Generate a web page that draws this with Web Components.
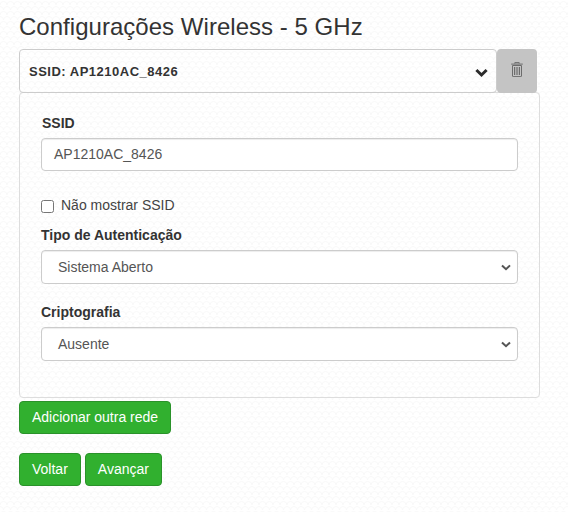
<!DOCTYPE html>
<html lang="pt">
<head>
<meta charset="utf-8">
<title>Configurações Wireless</title>
<style>
    html, body {
        margin: 0;
        background: #fff;
    }

    body {
        font-family: "Liberation Sans", Arial, sans-serif;
        font-size: 14px;
        color: #333;
    }
</style>
</head>
<body>
<wizard-page>
    <h-title slot="title">Configurações Wireless - 5 GHz</h-title>
    <ssid-header slot="header">SSID: AP1210AC_8426</ssid-header>
    <form-panel slot="panel">
        <text-field label="SSID" value="AP1210AC_8426"></text-field>
        <check-field>Não mostrar SSID</check-field>
        <select-field label="Tipo de Autenticação" value="Sistema Aberto"></select-field>
        <select-field label="Criptografia" value="Ausente"></select-field>
    </form-panel>
    <green-button slot="add">Adicionar outra rede</green-button>
    <green-button slot="nav">Voltar</green-button>
    <green-button slot="nav">Avançar</green-button>
</wizard-page>

<script>
class WizardPage extends HTMLElement {
    constructor() {
        super();
        this.attachShadow({ mode: 'open' });
        this.shadowRoot.innerHTML = `
            <style>
                :host {
                    display: block;
                    box-sizing: border-box;
                    width: 568px;
                    height: 512px;
                    padding: 14px 28px 0 19px;
                    overflow: hidden;
                    background-color: #fff;
                    background-image: url("data:image/svg+xml,%3Csvg xmlns='http://www.w3.org/2000/svg' width='14' height='10'%3E%3Cpath d='M0 5a3.5 3.5 0 0 1 7 0a3.5 3.5 0 0 1 7 0M-3.5 10a3.5 3.5 0 0 1 7 0a3.5 3.5 0 0 1 7 0a3.5 3.5 0 0 1 7 0' fill='none' stroke='%23f8f8f8'/%3E%3C/svg%3E");
                }

                .add {
                    display: flex;
                    margin-top: 3px;
                }

                .nav {
                    display: flex;
                    gap: 4px;
                    margin-top: 19px;
                }
            </style>
            <slot name="title"></slot>
            <slot name="header"></slot>
            <slot name="panel"></slot>
            <div class="add"><slot name="add"></slot></div>
            <div class="nav"><slot name="nav"></slot></div>
        `;
    }
}

class HTitle extends HTMLElement {
    constructor() {
        super();
        this.attachShadow({ mode: 'open' });
        this.shadowRoot.innerHTML = `
            <style>
                :host {
                    display: block;
                    font-size: 24px;
                    line-height: 26px;
                    letter-spacing: .03px;
                    height: 35px;
                    color: #333;
                }
            </style>
            <slot></slot>
        `;
    }
}

class SsidHeader extends HTMLElement {
    constructor() {
        super();
        this.attachShadow({ mode: 'open' });
        this.shadowRoot.innerHTML = `
            <style>
                :host {
                    display: flex;
                    height: 44px;
                }

                .bar {
                    box-sizing: border-box;
                    width: 478px;
                    display: flex;
                    align-items: center;
                    justify-content: space-between;
                    padding: 0 8px 0 9px;
                    border: 1px solid #ccc;
                    border-radius: 4px;
                    font-size: 13px;
                    font-weight: bold;
                    letter-spacing: .5px;
                    color: #333;
                }

                .trash {
                    width: 40px;
                    display: flex;
                    align-items: center;
                    justify-content: center;
                    padding-bottom: 4px;
                    box-sizing: border-box;
                    background: #c4c4c4;
                    border-radius: 4px;
                }
            </style>
            <div class="bar">
                <span><slot></slot></span>
                <svg width="13" height="10" viewBox="0 0 13 10" style="margin-top:3px"><path d="M1.4 2 6.5 7l5.1-5" fill="none" stroke="#2b2b2b" stroke-width="3"/></svg>
            </div>
            <div class="trash">
                <svg width="12" height="15" viewBox="0 0 12 15"><path d="M3.8 1.6V.6h4.4v1M.2 2.1h11.6" fill="none" stroke="#6c6c6c" stroke-width="1"/><path d="M1.5 3.5h9V14a.6.6 0 0 1-.6.6H2.1a.6.6 0 0 1-.6-.6z" fill="none" stroke="#6c6c6c"/><path d="M3.6 5v8M6 5v8M8.4 5v8" stroke="#6c6c6c" stroke-width="1.2"/></svg>
            </div>
        `;
    }
}

class FormPanel extends HTMLElement {
    constructor() {
        super();
        this.attachShadow({ mode: 'open' });
        this.shadowRoot.innerHTML = `
            <style>
                :host {
                    display: block;
                    box-sizing: border-box;
                    width: 521px;
                    height: 306px;
                    margin-top: -1px;
                    padding: 20px 21px 0 21px;
                    border: 1px solid #ddd;
                    border-radius: 4px;
                }
            </style>
            <slot></slot>
        `;
    }
}

const fieldControl = `
    .label {
        display: block;
        font-size: 14px;
        font-weight: bold;
        line-height: 20px;
        color: #333;
    }

    .box {
        box-sizing: border-box;
        width: 477px;
        border: 1px solid #ccc;
        border-radius: 4px;
        background: #fff;
        font-size: 14px;
        color: #555;
        box-shadow: inset 0 1px 1px rgba(0, 0, 0, .075);
    }
`;

class TextField extends HTMLElement {
    constructor() {
        super();
        this.attachShadow({ mode: 'open' });
        this.shadowRoot.innerHTML = `
            <style>
                :host {
                    display: block;
                    height: 82px;
                }

                ${fieldControl}

                .label {
                    margin-left: 1px;
                    margin-bottom: 5px;
                }

                .box {
                    height: 33px;
                    line-height: 31px;
                    padding: 0 12px;
                }
            </style>
            <span class="label"></span>
            <div class="box"></div>
        `;
        this.shadowRoot.querySelector('.label').textContent = this.getAttribute('label');
        this.shadowRoot.querySelector('.box').textContent = this.getAttribute('value');
    }
}

class CheckField extends HTMLElement {
    constructor() {
        super();
        this.attachShadow({ mode: 'open' });
        this.shadowRoot.innerHTML = `
            <style>
                :host {
                    display: flex;
                    align-items: center;
                    gap: 7px;
                    height: 20px;
                    margin-bottom: 10px;
                    font-size: 14px;
                    color: #444;
                }

                i {
                    box-sizing: border-box;
                    width: 13px;
                    height: 13px;
                    margin-top: 2px;
                    border: 1px solid #767676;
                    border-radius: 2.5px;
                    background: #fff;
                }
            </style>
            <i></i>
            <span><slot></slot></span>
        `;
    }
}

class SelectField extends HTMLElement {
    constructor() {
        super();
        this.attachShadow({ mode: 'open' });
        this.shadowRoot.innerHTML = `
            <style>
                :host {
                    display: block;
                    height: 77px;
                }

                ${fieldControl}

                .label {
                    margin-bottom: 5px;
                }

                .box {
                    height: 34px;
                    display: flex;
                    align-items: center;
                    justify-content: space-between;
                    padding: 0 6px 0 16px;
                }
            </style>
            <span class="label"></span>
            <div class="box">
                <span class="value"></span>
                <svg width="10" height="7" viewBox="0 0 10 7"><path d="M1 1.4 5 5.2l4-3.8" fill="none" stroke="#555" stroke-width="2"/></svg>
            </div>
        `;
        this.shadowRoot.querySelector('.label').textContent = this.getAttribute('label');
        this.shadowRoot.querySelector('.value').textContent = this.getAttribute('value');
    }
}

class GreenButton extends HTMLElement {
    constructor() {
        super();
        this.attachShadow({ mode: 'open' });
        this.shadowRoot.innerHTML = `
            <style>
                :host {
                    display: block;
                    box-sizing: border-box;
                    height: 33px;
                    padding: 0 12px;
                    line-height: 31px;
                    font-size: 14px;
                    color: #fff;
                    background: #31b02f;
                    border: 1px solid #2a922a;
                    border-radius: 4px;
                }
            </style>
            <slot></slot>
        `;
    }
}

customElements.define('wizard-page', WizardPage);
customElements.define('h-title', HTitle);
customElements.define('ssid-header', SsidHeader);
customElements.define('form-panel', FormPanel);
customElements.define('text-field', TextField);
customElements.define('check-field', CheckField);
customElements.define('select-field', SelectField);
customElements.define('green-button', GreenButton);
</script>
</body>
</html>
